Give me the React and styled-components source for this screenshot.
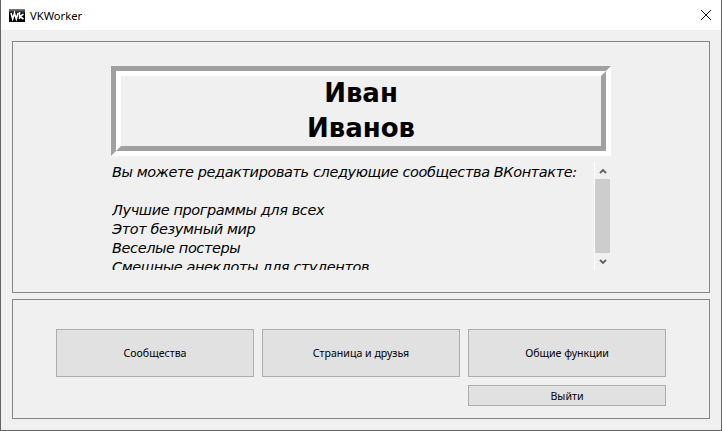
import React from "react";
import styled, { createGlobalStyle } from "styled-components";

const communities = [
  "Лучшие программы для всех",
  "Этот безумный мир",
  "Веселые постеры",
  "Смешные анекдоты для студентов",
];

const GlobalStyle = createGlobalStyle`
  html, body {
    margin: 0;
    padding: 0;
    background: #f0f0f0;
  }
`;

const Window = styled.div`
  box-sizing: border-box;
  width: 722px;
  height: 431px;
  display: flex;
  flex-direction: column;
  background: #f0f0f0;
  border: 1px solid #646464;
  border-top: 0;
  font-family: "Noto Sans", "Open Sans", sans-serif;
  color: #000;
`;

const TitleBar = styled.div`
  height: 30px;
  display: flex;
  align-items: center;
  background: #fff;
  padding: 0 9px 0 8px;
  flex: none;
`;

const Title = styled.span`
  margin-left: 5px;
  font-size: 11.2px;
  flex: 1;
`;

const Content = styled.div`
  flex: 1;
  display: flex;
  flex-direction: column;
  gap: 6px;
  padding: 11px;
`;

const Group = styled.div`
  box-sizing: border-box;
  height: ${(p) => p.$height}px;
  border: 1px solid #84868c;
  flex: none;
`;

const TopGroup = styled(Group)`
  padding: 24px 0 0 98px;
`;

const BottomGroup = styled(Group)`
  padding: 29px 0 0 43px;
`;

const BannerOuter = styled.div`
  box-sizing: border-box;
  width: 500px;
  height: 90px;
  border: 5px solid;
  border-color: #a0a0a0 #fff #fff #a0a0a0;
`;

const BannerInner = styled.div`
  box-sizing: border-box;
  height: 100%;
  display: flex;
  align-items: center;
  justify-content: center;
  text-align: center;
  border: 5px solid;
  border-color: #fff #a0a0a0 #a0a0a0 #fff;
  font-family: "DejaVu Sans", Verdana, sans-serif;
  font-size: 26px;
  font-weight: 700;
  line-height: 35px;
`;

const ListRow = styled.div`
  display: flex;
  width: 498px;
  height: 108px;
  margin: 6px 0 0 1px;
`;

const ListText = styled.div`
  flex: 1;
  overflow: hidden;
  padding-top: 1px;
  font-family: "DejaVu Sans", Verdana, sans-serif;
  font-size: 14.5px;
  letter-spacing: -0.4px;
  font-style: italic;
  line-height: 19px;
  white-space: nowrap;
`;

const Blank = styled.div`
  height: 19px;
`;

const Scrollbar = styled.div`
  box-sizing: border-box;
  width: 16px;
  display: flex;
  flex-direction: column;
  border-left: 1px solid #fff;
`;

const ArrowCell = styled.div`
  height: 17px;
  display: flex;
  align-items: center;
  justify-content: center;
  flex: none;
`;

const Thumb = styled.div`
  flex: 1;
  background: #cdcdcd;
`;

const Buttons = styled.div`
  display: grid;
  grid-template-columns: 198px 198px 198px;
  grid-template-rows: 48px 21px;
  column-gap: 8px;
  row-gap: 8px;
`;

const Button = styled.button`
  box-sizing: border-box;
  padding: 0;
  border: 1px solid #adadad;
  background: #e1e1e1;
  color: #000;
  font-family: inherit;
  font-size: 10.6px;
  grid-column: ${(p) => p.$column || "auto"};
`;

const AppIcon = () => (
  <svg width="16" height="13" viewBox="0 0 16 13">
    <defs>
      <linearGradient id="iconFade" x1="0" y1="0" x2="0" y2="1">
        <stop offset="0" stopColor="#8a8a8a" />
        <stop offset="0.35" stopColor="#000" />
      </linearGradient>
    </defs>
    <rect width="16" height="13" fill="url(#iconFade)" />
    <path
      d="M2 4 L3.7 10 L5.5 4 L7.3 10 L9 4 M10.5 3 V10 M14.5 5 L11 7.5 L14.5 10"
      fill="none"
      stroke="#fff"
      strokeWidth="1.6"
    />
  </svg>
);

const CloseIcon = () => (
  <svg width="12" height="12" viewBox="0 0 12 12">
    <path d="M1 1 L11 11 M11 1 L1 11" stroke="#111" strokeWidth="1" fill="none" />
  </svg>
);

const Chevron = ({ down }) => (
  <svg width="8" height="6" viewBox="0 0 8 6">
    <path
      d={down ? "M1 1 L4 4 L7 1" : "M1 5 L4 2 L7 5"}
      stroke="#606060"
      strokeWidth="1.8"
      fill="none"
    />
  </svg>
);

export default function App() {
  return (
    <>
      <GlobalStyle />
      <Window>
        <TitleBar>
          <AppIcon />
          <Title>VKWorker</Title>
          <CloseIcon />
        </TitleBar>
        <Content>
          <TopGroup $height={252}>
            <BannerOuter>
              <BannerInner>
                Иван
                <br />
                Иванов
              </BannerInner>
            </BannerOuter>
            <ListRow>
              <ListText>
                Вы можете редактировать следующие сообщества ВКонтакте:
                <Blank />
                {communities.map((name) => (
                  <div key={name}>{name}</div>
                ))}
              </ListText>
              <Scrollbar>
                <ArrowCell>
                  <Chevron />
                </ArrowCell>
                <Thumb />
                <ArrowCell>
                  <Chevron down />
                </ArrowCell>
              </Scrollbar>
            </ListRow>
          </TopGroup>
          <BottomGroup $height={120}>
            <Buttons>
              <Button>Сообщества</Button>
              <Button>Страница и друзья</Button>
              <Button>Общие функции</Button>
              <Button $column="3">Выйти</Button>
            </Buttons>
          </BottomGroup>
        </Content>
      </Window>
    </>
  );
}
